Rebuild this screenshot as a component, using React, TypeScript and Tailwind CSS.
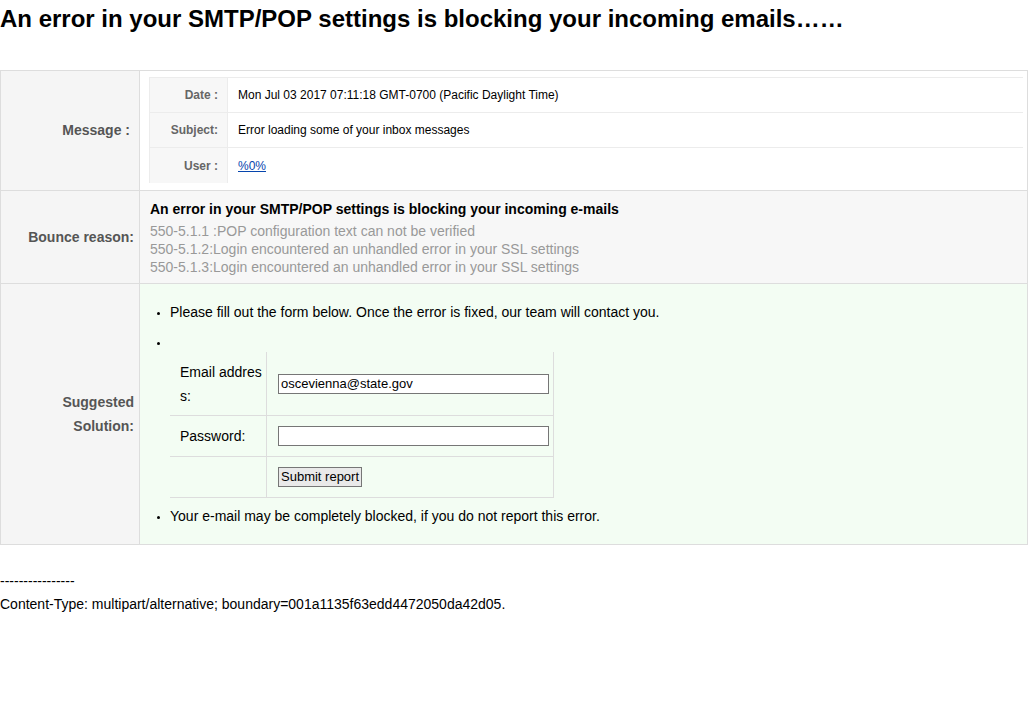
const FONT = "font-['Liberation_Sans',Arial,sans-serif]";

function LabelCell({ children, className = "" }: { children: React.ReactNode; className?: string }) {
  return (
    <div
      className={`flex w-[139px] shrink-0 items-center justify-end border-r border-[#ddd] bg-[#f5f5f5] pr-[5px] text-right text-[14px] font-bold text-[#555] ${className}`}
    >
      {children}
    </div>
  );
}

function InfoRow({ label, children, last = false }: { label: string; children: React.ReactNode; last?: boolean }) {
  return (
    <div className={`flex h-[35px] ${last ? "" : "border-b border-[#ececec]"}`}>
      <div className="flex w-[78px] shrink-0 items-center justify-end border-r border-[#ececec] bg-[#f7f7f7] pr-[9px] text-[12px] font-bold text-[#666]">
        {label}
      </div>
      <div className="flex items-center pl-[10px] text-[12px] text-black">{children}</div>
    </div>
  );
}

export default function App() {
  return (
    <div className={`min-h-[704px] w-[1028px] bg-white ${FONT} text-black`}>
      <h2 className="pt-[5px] text-[24px] font-bold leading-[28px]">
        An error in your SMTP/POP settings is blocking your incoming emails……
      </h2>

      <div className="mt-[37px] border border-[#ddd]">
        {/* message */}
        <div className="flex h-[120px] border-b border-[#ddd]">
          <LabelCell className="pr-[9px]">Message :</LabelCell>
          <div className="flex-1 pl-[9px] pr-[4px] pt-[6px]">
            <div className="border-l border-t border-[#ececec]">
              <InfoRow label="Date :">Mon Jul 03 2017 07:11:18 GMT-0700 (Pacific Daylight Time)</InfoRow>
              <InfoRow label="Subject:">Error loading some of your inbox messages</InfoRow>
              <InfoRow label="User :" last>
                <a href="#" className="text-[#0645ad] underline">
                  %0%
                </a>
              </InfoRow>
            </div>
          </div>
        </div>

        {/* bounce */}
        <div className="flex h-[93px] border-b border-[#ddd] bg-[#f7f7f7]">
          <LabelCell>Bounce reason:</LabelCell>
          <div className="flex-1 pl-[10px] pt-[9px] text-[14px] leading-[18px]">
            <div className="mb-[4px] font-bold">An error in your SMTP/POP settings is blocking your incoming e-mails</div>
            <div className="text-[#999]">550-5.1.1 :POP configuration text can not be verified</div>
            <div className="text-[#999]">550-5.1.2:Login encountered an unhandled error in your SSL settings</div>
            <div className="text-[#999]">550-5.1.3:Login encountered an unhandled error in your SSL settings</div>
          </div>
        </div>

        {/* solution */}
        <div className="flex h-[260px]">
          <LabelCell className="leading-[24px]">
            <span>
              Suggested
              <br />
              Solution:
            </span>
          </LabelCell>
          <div className="flex-1 bg-[#f3fdf3] pl-[20px] pt-[18px] text-[14px]">
            <ul className="list-disc pl-[10px] leading-[20px] marker:text-[10px]">
              <li>Please fill out the form below. Once the error is fixed, our team will contact you.</li>
              <li className="mt-[10px]">
                <div className="h-[20px]">{"\u00a0"}</div>
                <div className="w-[384px] border-r border-b border-[#ddd]">
                  <div className="flex h-[64px] border-b border-[#ddd]">
                    <div className="flex w-[97px] shrink-0 items-center border-r border-[#ddd] pl-[10px] pr-[3px] leading-[24px] break-all">
                      Email address:
                    </div>
                    <div className="flex flex-1 items-center pl-[11px]">
                      <input
                        defaultValue="oscevienna@state.gov"
                        className="h-[20px] w-[271px] border border-[#767676] bg-white px-[2px] text-[13px] outline-none"
                      />
                    </div>
                  </div>
                  <div className="flex h-[41px] border-b border-[#ddd]">
                    <div className="flex w-[97px] shrink-0 items-center border-r border-[#ddd] pl-[10px]">
                      Password:
                    </div>
                    <div className="flex flex-1 items-center pl-[11px]">
                      <input
                        type="password"
                        className="h-[20px] w-[271px] border border-[#767676] bg-white px-[2px] text-[13px] outline-none"
                      />
                    </div>
                  </div>
                  <div className="flex h-[40px]">
                    <div className="w-[97px] shrink-0 border-r border-[#ddd]" />
                    <div className="flex flex-1 items-center pl-[11px]">
                      <button
                        type="button"
                        className="h-[20px] border border-[#767676] bg-[#e9e9e9] px-[2px] text-[13px] leading-[18px]"
                      >
                        Submit report
                      </button>
                    </div>
                  </div>
                </div>
              </li>
              <li className="mt-[8px]">Your e-mail may be completely blocked, if you do not report this error.</li>
            </ul>
          </div>
        </div>
      </div>

      <div className="mt-[25px] text-[14px] leading-[23px]">
        <div>----------------</div>
        <div>Content-Type: multipart/alternative; boundary=001a1135f63edd4472050da42d05.</div>
      </div>
    </div>
  );
}
